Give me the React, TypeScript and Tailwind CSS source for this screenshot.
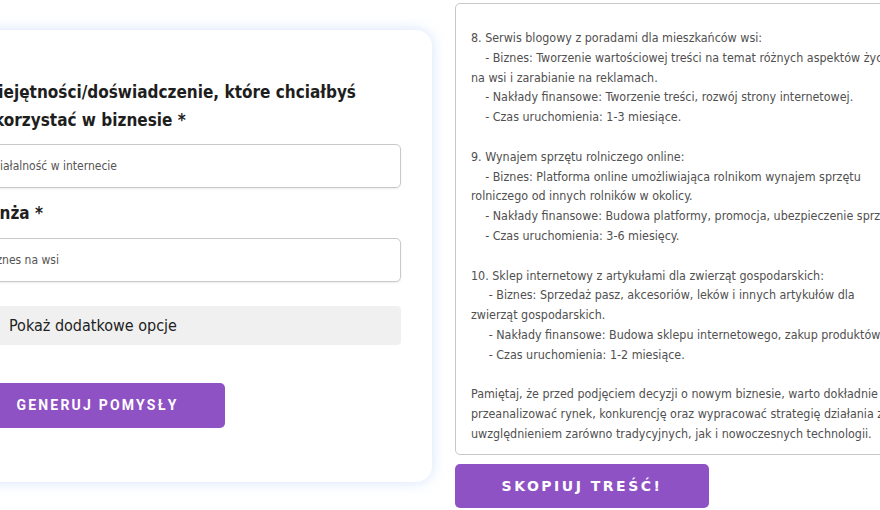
import { ChevronRight } from 'lucide-react'

const result = `8. Serwis blogowy z poradami dla mieszkańców wsi:
    - Biznes: Tworzenie wartościowej treści na temat różnych aspektów życia
na wsi i zarabianie na reklamach.
    - Nakłady finansowe: Tworzenie treści, rozwój strony internetowej.
    - Czas uruchomienia: 1-3 miesiące.

9. Wynajem sprzętu rolniczego online:
    - Biznes: Platforma online umożliwiająca rolnikom wynajem sprzętu
rolniczego od innych rolników w okolicy.
    - Nakłady finansowe: Budowa platformy, promocja, ubezpieczenie sprzętu.
    - Czas uruchomienia: 3-6 miesięcy.

10. Sklep internetowy z artykułami dla zwierząt gospodarskich:
     - Biznes: Sprzedaż pasz, akcesoriów, leków i innych artykułów dla
zwierząt gospodarskich.
     - Nakłady finansowe: Budowa sklepu internetowego, zakup produktów.
     - Czas uruchomienia: 1-2 miesiące.

Pamiętaj, że przed podjęciem decyzji o nowym biznesie, warto dokładnie
przeanalizować rynek, konkurencję oraz wypracować strategię działania z
uwzględnieniem zarówno tradycyjnych, jak i nowoczesnych technologii.`

export default function App() {
  return (
    <div className="flex h-[510px] w-[880px] overflow-hidden bg-white">
      {/* formularz (ucięty z lewej) */}
      <div className="-ml-[70px] mt-[30px] self-start w-[502px] shrink-0 rounded-2xl bg-white pl-[40px] pr-[31px] pt-[48px] pb-[54px] shadow-[0_0_14px_rgba(147,187,250,0.4)]">
        <label className="block font-['DejaVu_Sans_Condensed','DejaVu_Sans',sans-serif] text-[17px] font-bold leading-[28px] text-[#1e1e1e]">
          Umiejętności/doświadczenie, które chciałbyś wykorzystać w biznesie *
        </label>
        <input
          readOnly
          value="Działalność w internecie"
          className="mt-[10px] block h-[44px] w-full rounded-[5px] border border-[#c9c9c9] px-[15px] font-['DejaVu_Sans_Condensed','DejaVu_Sans',sans-serif] text-[12px] text-[#555] shadow-[0_1px_2px_rgba(0,0,0,0.08)] outline-none"
        />
        <label className="mt-[11px] block font-['DejaVu_Sans_Condensed','DejaVu_Sans',sans-serif] text-[17px] font-bold leading-[28px] text-[#1e1e1e]">
          Branża *
        </label>
        <input
          readOnly
          value="Biznes na wsi"
          className="mt-[11px] block h-[44px] w-full rounded-[5px] border border-[#c9c9c9] px-[15px] font-['DejaVu_Sans_Condensed','DejaVu_Sans',sans-serif] text-[12px] text-[#555] shadow-[0_1px_2px_rgba(0,0,0,0.08)] outline-none"
        />
        <div className="mt-[24px] flex h-[39px] items-center gap-[13px] rounded-[4px] bg-[#f0f0f0] pl-[14px] font-['DejaVu_Sans_Condensed','DejaVu_Sans',sans-serif] text-[16px] text-[#222]">
          <ChevronRight size={12} className="text-[#555]" />
          <span>Pokaż dodatkowe opcje</span>
        </div>
        <button className="mt-[38px] flex h-[45px] w-[255px] items-center justify-center rounded-[5px] bg-[#8f52c4] font-['Roboto',sans-serif] text-[14px] font-bold tracking-[2.2px] text-white">
          GENERUJ POMYSŁY
        </button>
      </div>

      {/* wynik */}
      <div className="ml-[23px] mt-[3px] flex shrink-0 flex-col">
        <div className="h-[452px] w-[460px] overflow-hidden whitespace-pre rounded-[5px] border border-[#c8c8c8] pl-[15px] pt-[24px] font-['DejaVu_Sans_Condensed','DejaVu_Sans',sans-serif] text-[12.4px] leading-[19.8px] text-[#505050]">
          {result}
        </div>
        <button className="mt-[9px] flex h-[44px] w-[254px] items-center justify-center rounded-[5px] bg-[#8f52c4] font-['DejaVu_Sans',sans-serif] text-[14px] font-bold tracking-[2.5px] text-white">
          SKOPIUJ TREŚĆ!
        </button>
      </div>
    </div>
  )
}
